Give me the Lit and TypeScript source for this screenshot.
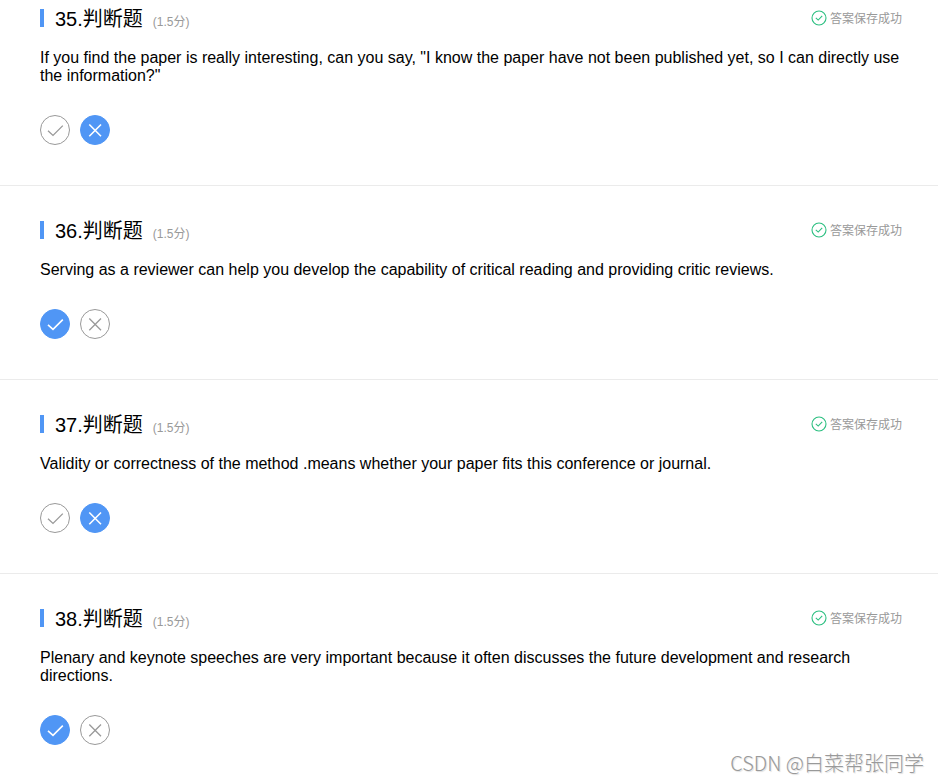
import { LitElement, html, css, svg } from "lit";
import { customElement, property, state } from "lit/decorators.js";

interface Question {
  no: number;
  text: string;
  answer: "true" | "false";
}

const QUESTIONS: Question[] = [
  {
    no: 35,
    text: 'If you find the paper is really interesting, can you say, "I know the paper have not been published yet, so I can directly use the information?"',
    answer: "false",
  },
  {
    no: 36,
    text: "Serving as a reviewer can help you develop the capability of critical reading and providing critic reviews.",
    answer: "true",
  },
  {
    no: 37,
    text: "Validity or correctness of the method .means whether your paper fits this conference or journal.",
    answer: "false",
  },
  {
    no: 38,
    text: "Plenary and keynote speeches are very important because it often discusses the future development and research directions.",
    answer: "true",
  },
];

const tick = svg`<path d="M8 15.8 L13 20.4 L22.8 10.6" />`;
const cross = svg`<path d="M9.3 9.5 L21 21.2 M21 9.5 L9.3 21.2" />`;

@customElement("judge-question")
class JudgeQuestion extends LitElement {
  @property({ attribute: false }) question!: Question;
  @state() private chosen = "";

  static styles = css`
    :host {
      display: block;
    }
    .head {
      display: flex;
      align-items: center;
      height: 18px;
    }
    .bar {
      width: 4px;
      height: 18px;
      background: #5096f5;
    }
    .title {
      margin: 0 0 0 11px;
      padding-top: 2px;
      font-size: 20px;
      line-height: 24px;
      font-weight: 400;
      white-space: nowrap;
    }
    .score {
      margin-left: 10px;
      padding-top: 8px;
      font-size: 12px;
      line-height: 18px;
      color: #999;
    }
    .saved {
      display: flex;
      align-items: center;
      gap: 3px;
      margin-left: auto;
      font-size: 12px;
      line-height: 18px;
      color: #999;
    }
    .saved-text {
      padding-top: 2px;
    }
    .saved-icon {
      width: 16px;
      height: 16px;
      fill: none;
      stroke: #2bbf80;
    }
    .text {
      margin: 22px 0 30px;
      font-size: 16px;
      line-height: 18px;
    }
    .choices {
      display: flex;
      gap: 10px;
      margin: 0;
      padding: 0;
      border: 0;
    }
    .choice {
      display: grid;
      width: 30px;
      height: 30px;
      cursor: pointer;
    }
    .radio,
    .mark {
      grid-area: 1 / 1;
      width: 30px;
      height: 30px;
      margin: 0;
    }
    .radio {
      appearance: none;
      box-sizing: border-box;
      border: 1px solid #999;
      border-radius: 50%;
      cursor: pointer;
    }
    .radio:checked {
      border-color: #5096f5;
      background: #5096f5;
    }
    .mark {
      position: relative;
      pointer-events: none;
      fill: none;
      stroke: #999;
      stroke-width: 1.3;
    }
    .radio:checked + .mark {
      stroke: #fff;
      stroke-width: 1.6;
    }
  `;

  private choice(value: string, label: string, shape: unknown) {
    const current = this.chosen || this.question.answer;
    return html`<label class="choice">
      <input
        class="radio"
        type="radio"
        name="answer"
        aria-label=${label}
        .checked=${current === value}
        @change=${() => (this.chosen = value)}
      />
      <svg class="mark" viewBox="0 0 30 30" aria-hidden="true">${shape}</svg>
    </label>`;
  }

  render() {
    const q = this.question;
    return html`
      <div class="head">
        <span class="bar"></span>
        <h2 class="title">${q.no}.判断题</h2>
        <span class="score">(1.5分)</span>
        <span class="saved">
          <svg class="saved-icon" viewBox="0 0 16 16" aria-hidden="true">
            <circle cx="8" cy="8" r="7" stroke-width="1.1" />
            <path d="M4.8 7.9 L7.2 10.1 L11.2 5.9" stroke-width="1.1" />
          </svg>
          <span class="saved-text">答案保存成功</span>
        </span>
      </div>
      <p class="text">${q.text}</p>
      <fieldset class="choices" aria-label="判断题 ${q.no}">
        ${this.choice("true", "对", tick)} ${this.choice("false", "错", cross)}
      </fieldset>
    `;
  }
}

@customElement("app-root")
class AppRoot extends LitElement {
  static styles = css`
    :host {
      display: block;
      position: relative;
      background: #fff;
      color: #000;
      font-family: "Liberation Sans", "Noto Sans CJK SC", sans-serif;
    }
    .item {
      padding: 35px 36px 40px 40px;
      border-bottom: 1px solid #ebebeb;
    }
    .item:first-child {
      padding-top: 9px;
    }
    .item:last-child {
      padding-bottom: 37px;
      border-bottom: 0;
    }
    .watermark {
      position: absolute;
      right: 14px;
      bottom: 7px;
      font-family: "Noto Sans CJK SC", sans-serif;
      font-weight: 300;
      font-size: 20px;
      line-height: 24px;
      color: #999;
      text-shadow: 1px 1px 1px #ddd;
    }
  `;

  render() {
    return html`
      <main>
        ${QUESTIONS.map(
          (q) => html`<section class="item"><judge-question .question=${q}></judge-question></section>`
        )}
      </main>
      <div class="watermark">CSDN @白菜帮张同学</div>
    `;
  }
}
